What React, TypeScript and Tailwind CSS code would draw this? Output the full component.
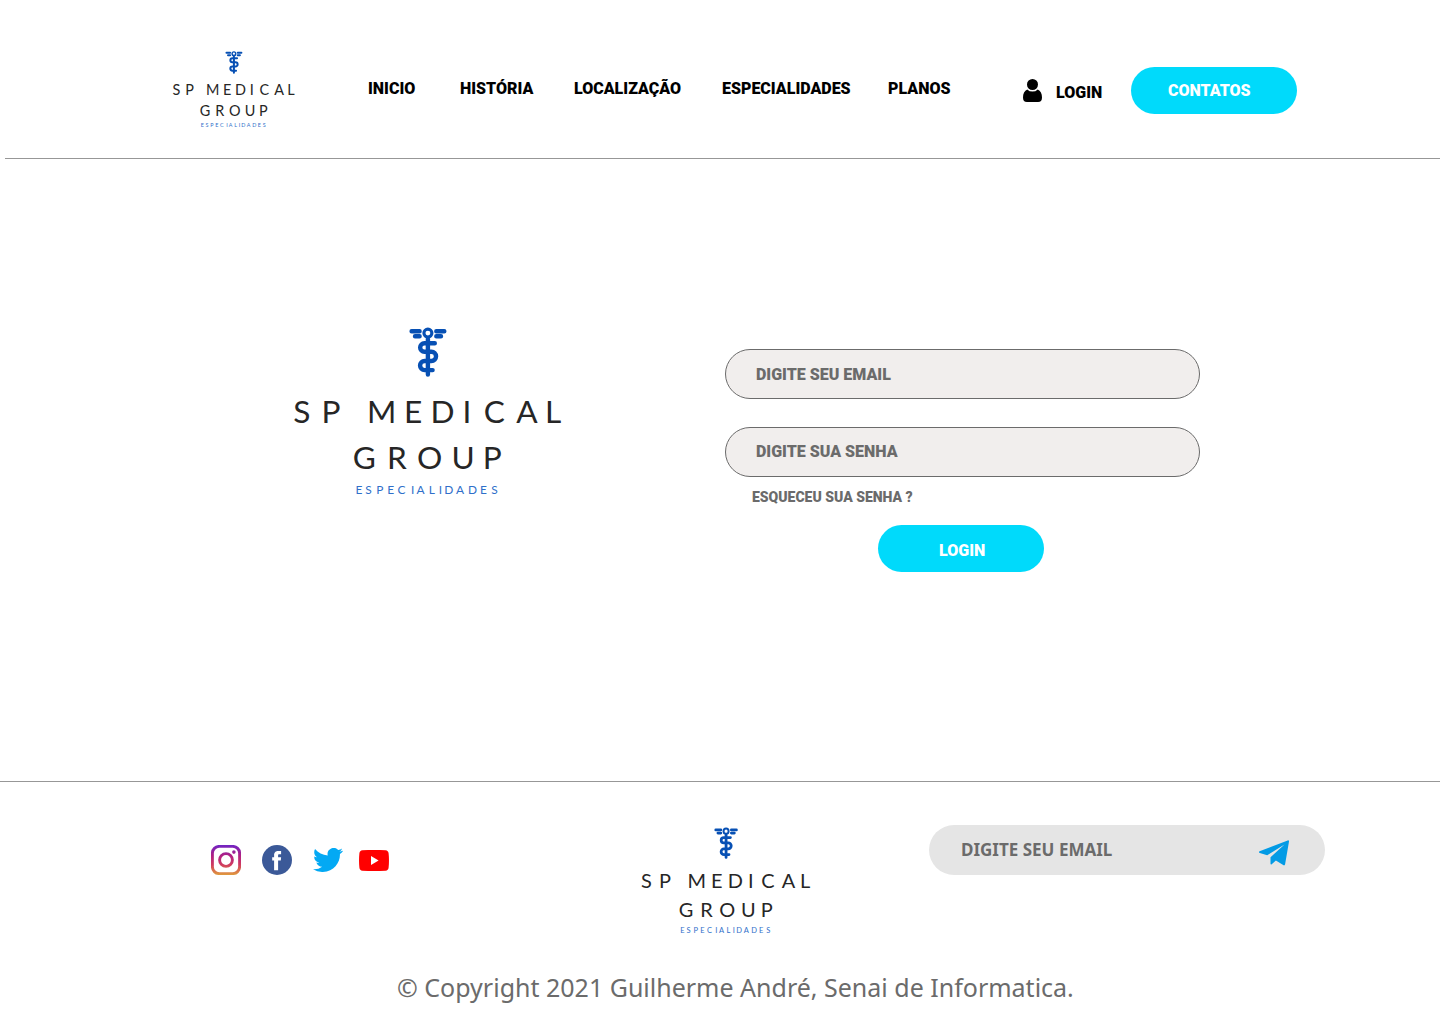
import React from "react";

const ESPECIALIDADES_X =
  "358.900 368.600 379.700 390.600 401.500 412.600 420.600 431.700 440.300 448.700 460 472.400 483.400 494.600";

function Logo({ className }: { className: string }) {
  return (
    <svg viewBox="290 325 274 172" className={className} aria-label="SP Medical Group" preserveAspectRatio="none">
      <g fill="none" stroke="#0750b4" strokeLinecap="round">
        <circle cx="427.9" cy="333.1" r="4" strokeWidth="3.1" />
        <path
          strokeWidth="4.4"
          d="M411.6 331.2H419.6M415 336.2H419.6M436.3 331.2H444.3M436.3 336.2H441M427.9 339V374.6"
        />
        <path
          strokeWidth="4.4"
          d="M434.8 343.2H424.4A4.2 4.2 0 0 0 424.4 351.7H431.4A4.6 4.6 0 0 1 431.4 361H424.6A4.5 4.5 0 0 0 424.6 370.1H432.6"
        />
      </g>
      <g fontFamily="Lato, sans-serif" textAnchor="middle">
        <g fill="#262626" fontSize="31.6" fontWeight="400">
          <text y="422.6" x="301.8 331 354 381.6 413.2 442.4 467 494.3 527 553">SP MEDICAL</text>
          <text y="468.5" x="364.400 397 429.600 463.200 492.200">GROUP</text>
        </g>
        <text y="493.500" x={ESPECIALIDADES_X} fill="#2f6fca" fontSize="11.9" fontWeight="400">
          ESPECIALIDADES
        </text>
      </g>
    </svg>
  );
}

function Instagram() {
  return (
    <svg viewBox="0 0 30 30" className="size-[30px]">
      <defs>
        <linearGradient id="insta" x1="0" y1="0" x2="0" y2="30" gradientUnits="userSpaceOnUse">
          <stop offset="0" stopColor="#7024c4" />
          <stop offset="0.35" stopColor="#b02084" />
          <stop offset="0.65" stopColor="#cf3a60" />
          <stop offset="1" stopColor="#e09b3d" />
        </linearGradient>
      </defs>
      <g fill="none" stroke="url(#insta)" strokeWidth="2.9">
        <rect x="1.4" y="1.4" width="27.2" height="27.2" rx="6.8" />
        <circle cx="15" cy="15" r="6.4" />
      </g>
      <circle cx="22.9" cy="7.1" r="1.8" fill="url(#insta)" />
    </svg>
  );
}

function Facebook() {
  return (
    <svg viewBox="0 0 30 30" className="size-[30px]">
      <circle cx="15" cy="15" r="15" fill="#3b5998" />
      <path
        fill="#fff"
        d="M18.8 15.6h-2.700v9.600h-4v-9.600h-1.900v-3.400h1.900V10c0-1.600.8-4 4-4h3v3.300h-2.100c-.4 0-.9.200-.9.900v2h3z"
      />
    </svg>
  );
}

function Twitter() {
  return (
    <svg viewBox="0 0 24 19.5" className="h-6 w-[30px]" preserveAspectRatio="none">
      <path
        fill="#03a9f4"
        transform="translate(0 -2.25)"
        d="M23.953 4.57a10 10 0 01-2.825.775 4.958 4.958 0 002.163-2.723c-.951.555-2.005.959-3.127 1.184a4.92 4.92 0 00-8.384 4.482C7.69 8.095 4.067 6.13 1.64 3.162a4.822 4.822 0 00-.666 2.475c0 1.71.87 3.213 2.188 4.096a4.904 4.904 0 01-2.228-.616v.06a4.923 4.923 0 003.946 4.827 4.996 4.996 0 01-2.212.085 4.936 4.936 0 004.604 3.417 9.867 9.867 0 01-6.102 2.105c-.39 0-.779-.023-1.17-.067a13.995 13.995 0 007.557 2.209c9.053 0 13.998-7.496 13.998-13.985 0-.21 0-.42-.015-.63A9.935 9.935 0 0024 4.59z"
      />
    </svg>
  );
}

function Youtube() {
  return (
    <svg viewBox="0 0 30 21" className="h-[21px] w-[30px]">
      <path
        fill="#f00"
        d="M3.400.3C7 .1 11 0 15 0s8 .1 11.600.3c1.800.2 2.700 1.200 3 3 .5 4.500.5 9.900 0 14.400-.3 1.800-1.200 2.800-3 3C23 20.900 19 21 15 21s-8-.1-11.600-.3c-1.800-.2-2.700-1.200-3-3-.5-4.500-.5-9.900 0-14.400.3-1.800 1.200-2.800 3-3z"
      />
      <path fill="#fff" d="M12 6v9l7.600-4.500z" />
    </svg>
  );
}

function User() {
  return (
    <svg viewBox="0 0 19 23" className="h-[23px] w-[19px]">
      <circle cx="9.500" cy="5.500" r="5.500" />
      <path d="M4.300 10.400a7.300 7.300 0 0 0 10.400 0C17.600 11.400 19 14.500 19 18.500c0 3-1.300 4.500-4 4.500H4c-2.700 0-4-1.500-4-4.500 0-4 1.400-7.100 4.300-8.100z" />
    </svg>
  );
}

function Plane() {
  return (
    <svg viewBox="0 0 30 26" className="h-[26px] w-[30px]">
      <path
        fill="#039be5"
        d="M.6 11.200 28.700.4c.8-.3 1.400.1 1.300 1L26.100 24.300c-.2 1.100-1 1.400-1.900.8l-7.300-4.700-4.200 3.900c-.6.5-1.200.3-1.200-.5v-6.500L25.500 4.500 8.200 15.300.8 13.100c-1-.4-1.100-1.400-.2-1.900z"
      />
    </svg>
  );
}

const field =
  "h-[50px] w-[475px] rounded-full border border-[#6b6b6b] bg-[#f1eeed] pl-[30px] leading-[50px] text-[#6b6b6b]";

export default function App() {
  return (
    <div className="flex h-[1024px] w-[1440px] flex-col overflow-hidden bg-white font-['Roboto',sans-serif] text-base font-black text-black">
      <header className="ml-[5px] flex h-[159px] items-start border-b border-[#979797] pl-[166px]">
        <Logo className="mt-[49.5px] mr-px h-[79px] w-[125px]" />
        <nav className="mt-[79px] ml-[71px] grid grid-cols-[92px_114px_148px_166px_135px] leading-[19px] whitespace-nowrap">
          <a>INICIO</a>
          <a>HISTÓRIA</a>
          <a>LOCALIZAÇÃO</a>
          <a>ESPECIALIDADES</a>
          <a>PLANOS</a>
        </nav>
        <div className="mt-[79px] flex w-[108px] gap-[14px]">
          <User />
          <a className="mt-1 leading-[19px]">LOGIN</a>
        </div>
        <button className="mt-[67px] h-[47px] w-[166px] rounded-full bg-[#00dafb] pl-[37px] text-left leading-[47px] text-white">
          CONTATOS
        </button>
      </header>

      <main className="flex h-[622px] items-start pl-[290px]">
        <Logo className="mt-[166px] h-[172px] w-[274px]" />
        <form className="mt-[190px] ml-[161px] flex w-[475px] flex-col">
          <div className={field}>DIGITE SEU EMAIL</div>
          <div className={`${field} mt-7`}><span className="relative -top-px">DIGITE SUA SENHA</span></div>
          <a className="mt-3 ml-[27px] text-sm leading-4 text-[#6b6b6b]">ESQUECEU SUA SENHA ?</a>
          <button
            type="button"
            className="mt-5 ml-[153px] h-[47px] w-[166px] rounded-full bg-[#00dafb] pt-1 pl-[61px] text-left text-white"
          >
            LOGIN
          </button>
        </form>
      </main>

      <footer className="flex h-[243px] flex-col border-t border-[#979797]">
        <div className="flex h-[180px] items-start pl-[211px]">
          <div className="mt-[63px] flex w-[427.5px] items-center">
            <Instagram />
            <div className="ml-[21px]"><Facebook /></div>
            <div className="ml-[21px]"><Twitter /></div>
            <div className="ml-4"><Youtube /></div>
          </div>
          <Logo className="mt-[44px] h-[109px] w-[173px]" />
          <div className="mt-[43px] ml-[117.5px] flex h-[50px] w-[396px] items-start justify-between rounded-full bg-[#e5e5e5] pr-9 pl-8 font-['Noto_Sans',sans-serif] text-[17px] font-bold text-[#6b6b6b]">
            <span className="leading-[50px]">DIGITE SEU EMAIL</span>
            <div className="mt-[15px]"><Plane /></div>
          </div>
        </div>
        <p className="ml-[397px] font-['Noto_Sans',sans-serif] text-[25px] leading-[50px] font-normal whitespace-nowrap text-[#6b6b6b]">
          © Copyright 2021 Guilherme André, Senai de Informatica.
        </p>
      </footer>
    </div>
  );
}
